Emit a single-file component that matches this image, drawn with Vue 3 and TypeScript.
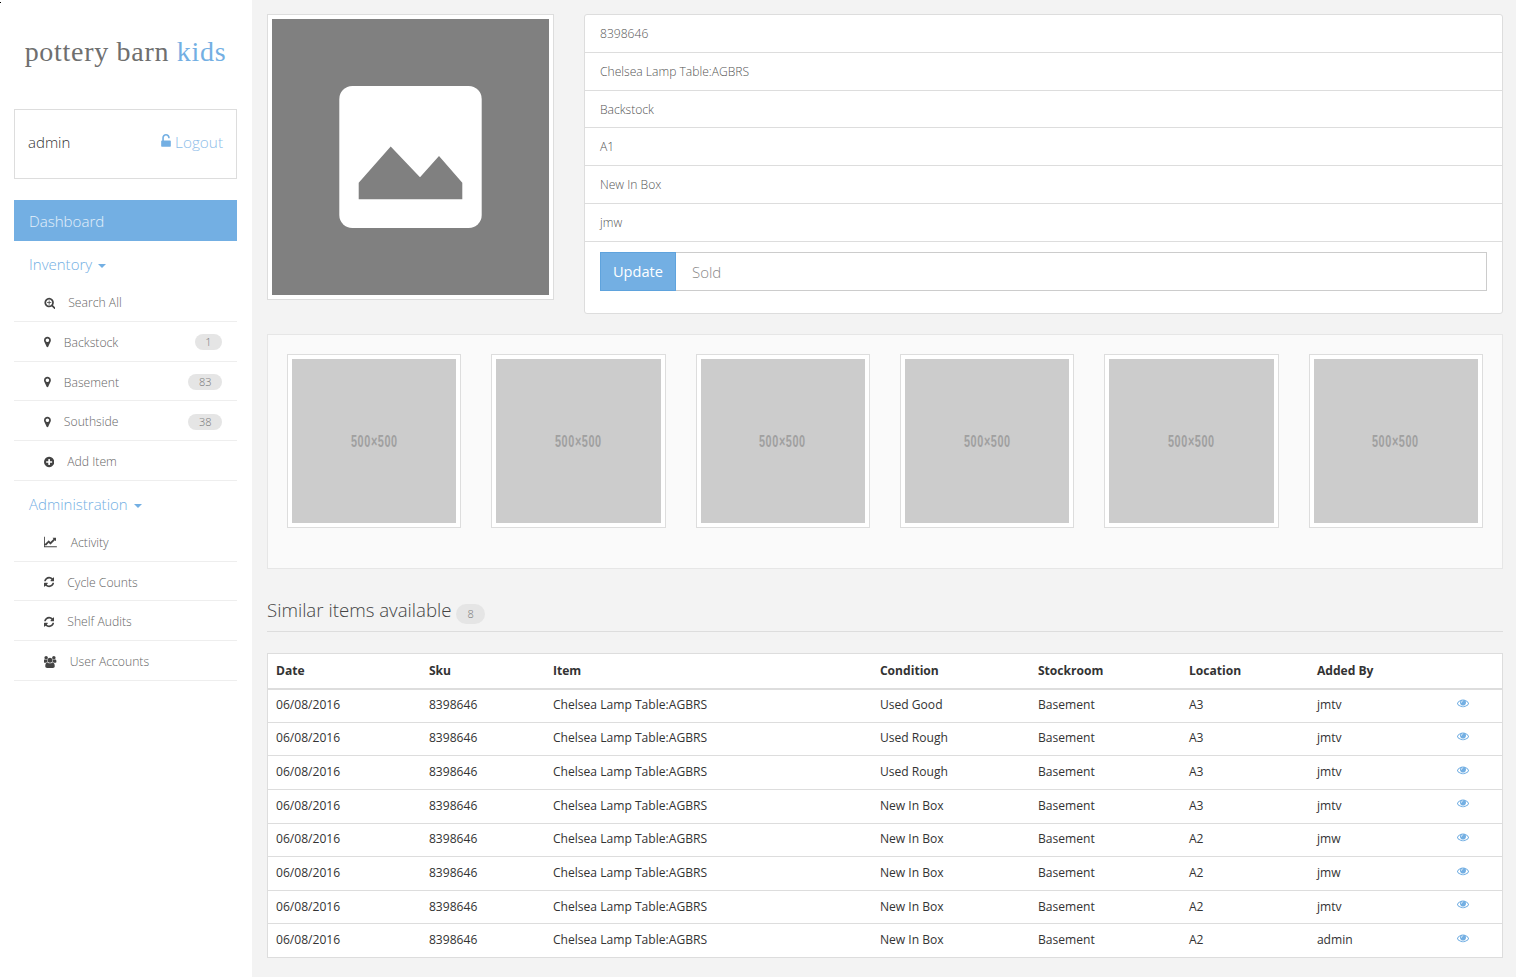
<script setup lang="ts">
const icons = {
  search: { w: 1664, d: 'M1088 800v64q0 13-9.5 22.5t-22.5 9.5h-224v224q0 13-9.5 22.5t-22.5 9.5h-64q-13 0-22.5-9.5t-9.5-22.5v-224h-224q-13 0-22.5-9.5t-9.5-22.5v-64q0-13 9.5-22.5t22.5-9.5h224v-224q0-13 9.5-22.5t22.5-9.5h64q13 0 22.5 9.5t9.5 22.5v224h224q13 0 22.5 9.5t9.5 22.5zm128 32q0-185-131.5-316.5t-316.5-131.5-316.5 131.5-131.5 316.5 131.5 316.5 316.5 131.5 316.5-131.5 131.5-316.5zm512 832q0 53-37.5 90.5t-90.5 37.5q-54 0-90-38l-343-342q-179 124-399 124-143 0-273.5-55.5t-225-150-150-225-55.5-273.5 55.5-273.5 150-225 225-150 273.5-55.5 273.5 55.5 225 150 150 225 55.5 273.5q0 220-124 399l343 343q37 37 37 90z' },
  marker: { w: 1024, x: 384, d: 'M1152 640q0-106-75-181t-181-75-181 75-75 181 75 181 181 75 181-75 75-181zm256 0q0 109-33 179l-364 774q-16 33-47.5 52t-67.5 19-67.5-19-46.5-52l-365-774q-33-70-33-179 0-212 150-362t362-150 362 150 150 362z' },
  plus: { w: 1536, x: 128, d: 'M1344 960v-128q0-26-19-45t-45-19h-256v-256q0-26-19-45t-45-19h-128q-26 0-45 19t-19 45v256h-256q-26 0-45 19t-19 45v128q0 26 19 45t45 19h256v256q0 26 19 45t45 19h128q26 0 45-19t19-45v-256h256q26 0 45-19t19-45zm320-64q0 209-103 385.5t-279.5 279.5-385.5 103-385.5-103-279.5-279.5-103-385.5 103-385.5 279.5-279.5 385.5-103 385.5 103 279.5 279.5 103 385.5z' },
  chart: { w: 2048, d: 'M1920 1536v128h-1920v-1536h128v1408h1792zm-128-1248v435q0 21-19.5 29.5t-35.5-7.5l-121-121-633 633q-10 10-23 10t-23-10l-233-233-416 416-192-192 585-585q10-10 23-10t23 10l233 233 464-464-121-121q-16-16-7.5-35.5t29.5-19.5h435q14 0 23 9t9 23z' },
  refresh: { w: 1536, x: 128, d: 'M1639 1056q0 5-1 7-64 268-268 434.5t-478 166.5q-146 0-282.5-55t-243.5-157l-129 129q-19 19-45 19t-45-19-19-45v-448q0-26 19-45t45-19h448q26 0 45 19t19 45-19 45l-137 137q71 66 161 102t187 36q134 0 250-65t186-179q11-17 53-117 8-23 30-23h192q13 0 22.5 9.5t9.5 22.5zm25-800v448q0 26-19 45t-45 19h-448q-26 0-45-19t-19-45 19-45l138-138q-148-137-349-137-134 0-250 65t-186 179q-11 17-53 117-8 23-30 23h-199q-13 0-22.5-9.5t-9.5-22.5v-7q65-268 270-434.5t480-166.5q146 0 284 55.5t245 156.5l130-129q19-19 45-19t45 19 19 45z' },
  users: { w: 1920, d: 'M529 896q-162 5-265 128h-134q-82 0-138-40.5t-56-118.5q0-353 124-353 6 0 43.5 21t97.5 42.5 119 21.5q67 0 133-23-5 37-5 66 0 139 81 256zm1071 637q0 120-73 189.5t-194 69.5h-874q-121 0-194-69.5t-73-189.5q0-53 3.5-103.5t14-109 26.5-108.5 43-97.5 62-81 85.5-53.5 111.5-20q10 0 43 21.5t73 48 107 48 135 21.5 135-21.5 107-48 73-48 43-21.5q61 0 111.5 20t85.5 53.5 62 81 43 97.5 26.5 108.5 14 109 3.5 103.5zm-1024-1277q0 106-75 181t-181 75-181-75-75-181 75-181 181-75 181 75 75 181zm704 384q0 159-112.5 271.5t-271.5 112.5-271.5-112.5-112.5-271.5 112.5-271.5 271.5-112.5 271.5 112.5 112.5 271.5zm576 225q0 78-56 118.5t-138 40.5h-134q-103-123-265-128 81-117 81-256 0-29-5-66 66 23 133 23 59 0 119-21.5t97.5-42.5 43.5-21q124 0 124 353zm-128-609q0 106-75 181t-181 75-181-75-75-181 75-181 181-75 181 75 75 181z' },
}
const eye = 'M1664 960q-152-236-381-353 61 104 61 225 0 185-131.5 316.5t-316.5 131.5-316.5-131.5-131.5-316.5q0-121 61-225-229 117-381 353 133 205 333.5 326.5t434.5 121.5 434.5-121.5 333.5-326.5zm-720-384q0-20-14-34t-34-14q-125 0-214.5 89.5t-89.5 214.5q0 20 14 34t34 14 34-14 14-34q0-86 61-147t147-61q20 0 34-14t14-34zm848 384q0 34-20 69-140 230-376.5 368.5t-499.5 138.5-499.5-139-376.5-368q-20-35-20-69t20-69q140-229 376.5-368t499.5-139 499.5 139 376.5 368q20 35 20 69z'
const lock = 'M1056 768q40 0 68 28t28 68v576q0 40-28 68t-68 28h-960q-40 0-68-28t-28-68v-576q0-40 28-68t68-28h32v-320q0-185 131.5-316.5t316.5-131.5 316.5 131.5 131.5 316.5q0 26-19 45t-45 19h-64q-26 0-45-19t-19-45q0-106-75-181t-181-75-181 75-75 181v320h736z'

type IconName = keyof typeof icons
interface NavItem { icon: IconName; label: string; badge?: string }

const inventory: NavItem[] = [
  { icon: 'search', label: 'Search All' },
  { icon: 'marker', label: 'Backstock', badge: '1' },
  { icon: 'marker', label: 'Basement', badge: '83' },
  { icon: 'marker', label: 'Southside', badge: '38' },
  { icon: 'plus', label: 'Add Item' },
]
const admin: NavItem[] = [
  { icon: 'chart', label: 'Activity' },
  { icon: 'refresh', label: 'Cycle Counts' },
  { icon: 'refresh', label: 'Shelf Audits' },
  { icon: 'users', label: 'User Accounts' },
]
const groups = [
  { title: 'Inventory', items: inventory },
  { title: 'Administration', items: admin },
]
const details = ['8398646', 'Chelsea Lamp Table:AGBRS', 'Backstock', 'A1', 'New In Box', 'jmw']
const thumbs = [1, 2, 3, 4, 5, 6]
const columns = ['Date', 'Sku', 'Item', 'Condition', 'Stockroom', 'Location', 'Added By', '']
const rows = [
  ['Used Good', 'A3', 'jmtv'],
  ['Used Rough', 'A3', 'jmtv'],
  ['Used Rough', 'A3', 'jmtv'],
  ['New In Box', 'A3', 'jmtv'],
  ['New In Box', 'A2', 'jmw'],
  ['New In Box', 'A2', 'jmw'],
  ['New In Box', 'A2', 'jmtv'],
  ['New In Box', 'A2', 'admin'],
]
</script>

<template>
  <div class="page">
    <span class="speck"></span>
    <aside class="sidebar">
      <div class="logo">pottery barn <span class="logo-kids">kids</span></div>
      <div class="user-box">
        <span class="user-name">admin</span>
        <a class="logout">
          <svg class="lock" viewBox="0 0 1152 1792" aria-hidden="true"><path :d="lock" /></svg>
          Logout
        </a>
      </div>
      <div class="dashboard">Dashboard</div>
      <nav v-for="group in groups" :key="group.title">
        <div class="group-title">{{ group.title }}<span class="caret"></span></div>
        <div v-for="item in group.items" :key="item.label" class="nav-row">
          <svg
            class="nav-icon"
            :viewBox="`${icons[item.icon].x ?? 0} 0 ${icons[item.icon].w} 1792`"
            :style="{ width: (icons[item.icon].w * 12) / 1792 + 'px' }"
            aria-hidden="true"
          >
            <path :d="icons[item.icon].d" />
          </svg>
          <span class="nav-label">{{ item.label }}</span>
          <span v-if="item.badge" class="badge nav-badge">{{ item.badge }}</span>
        </div>
      </nav>
    </aside>

    <main class="content">
      <section class="top">
        <div class="hero">
          <svg class="hero-image" viewBox="0 0 277 276" aria-hidden="true">
            <rect width="277" height="276" fill="#808080" />
            <rect x="67.3" y="67" width="142.4" height="142" rx="13" fill="#fff" />
            <polygon points="86.7,163.7 118.7,127.4 148,158.3 167,137 190.3,163.7 190.3,180.3 86.7,180.3" fill="#808080" />
          </svg>
        </div>
        <div class="details">
          <div v-for="d in details" :key="d" class="detail-row">{{ d }}</div>
          <div class="update-form">
            <button class="update-btn" type="button">Update</button>
            <div class="status-input">Sold</div>
          </div>
        </div>
      </section>

      <section class="gallery">
        <div v-for="t in thumbs" :key="t" class="thumb">
          <div class="thumb-image"><span class="thumb-text">500×500</span></div>
        </div>
      </section>

      <h2 class="section-title">Similar items available <span class="badge title-badge">8</span></h2>

      <table class="items">
        <colgroup>
          <col class="c1" /><col class="c2" /><col class="c3" /><col class="c4" />
          <col class="c5" /><col class="c6" /><col class="c7" /><col />
        </colgroup>
        <thead>
          <tr><th v-for="c in columns" :key="c">{{ c }}</th></tr>
        </thead>
        <tbody>
          <tr v-for="(r, i) in rows" :key="i">
            <td>06/08/2016</td>
            <td>8398646</td>
            <td>Chelsea Lamp Table:AGBRS</td>
            <td>{{ r[0] }}</td>
            <td>Basement</td>
            <td>{{ r[1] }}</td>
            <td>{{ r[2] }}</td>
            <td class="eye-cell">
              <svg class="eye" viewBox="0 0 1792 1792" aria-hidden="true"><path :d="eye" /></svg>
            </td>
          </tr>
        </tbody>
      </table>
    </main>
  </div>
</template>

<style>
html, body { margin: 0; background: #f3f3f3; }
</style>

<style scoped>
.page {
  position: relative;
  display: flex;
  height: 977px;
  overflow: hidden;
  font-family: "Open Sans", "Noto Sans", sans-serif;
  font-weight: 300;
  font-size: 12.1px;
  color: #333;
  background: #f3f3f3;
}
.speck {
  position: absolute;
  left: 0;
  top: 2px;
  width: 1px;
  height: 1px;
  background: #000;
}
.sidebar {
  width: 252px;
  box-sizing: border-box;
  flex: none;
  padding: 0 15px 0 14px;
  background: #fff;
}
.logo {
  height: 109px;
  padding-top: 33px;
  box-sizing: border-box;
  font-family: "Liberation Serif", serif;
  font-size: 28px;
  line-height: 38px;
  letter-spacing: 0.7px;
  color: #6f6f6f;
  text-align: center;
  white-space: nowrap;
}
.logo-kids { color: #73afe3; }
.user-box {
  display: flex;
  justify-content: space-between;
  align-items: center;
  height: 70px;
  box-sizing: border-box;
  padding: 0 13px 5px;
  border: 1px solid #ddd;
  font-size: 15px;
}
.user-name { color: #333; font-size: 15px; }
.logout { color: #8dbde9; font-size: 15.3px; }
.lock { height: 15px; width: 10px; fill: #73afe3; vertical-align: -1px; }
.dashboard {
  margin-top: 21px;
  height: 41px;
  line-height: 43px;
  padding-left: 15px;
  background: #73afe3;
  color: #e3effa;
  font-size: 15.1px;
}
.group-title {
  height: 41px;
  padding-left: 15px;
  line-height: 47px;
  font-size: 15px;
  color: #73afe3;
}
.caret {
  display: inline-block;
  margin-left: 6px;
  vertical-align: 2px;
  border-top: 4px solid #73afe3;
  border-left: 4px solid transparent;
  border-right: 4px solid transparent;
}
.nav-row {
  display: flex;
  align-items: center;
  height: 39.75px;
  box-sizing: border-box;
  padding: 2.6px 15px 0 30px;
  border-bottom: 1px solid #eee;
  color: #666;
  font-size: 12.2px;
}
.nav-icon { height: 12px; margin-right: 13px; fill: #444; flex: none; }
.nav-label { flex: 1; }
.badge {
  display: inline-block;
  border-radius: 10px;
  background: #e5e5e5;
  color: #777;
  font-size: 11px;
  text-align: center;
}
.nav-badge { padding: 0 10.5px; line-height: 16px; }

.content {
  flex: 1;
  min-width: 0;
  padding: 14px 13px 0 15px;
}
.top {
  display: grid;
  grid-template-columns: 287px 1fr;
  gap: 30px;
  align-items: start;
}
.hero {
  box-sizing: border-box;
  height: 286px;
  padding: 4px;
  background: #fff;
  border: 1px solid #ddd;
}
.hero-image { display: block; width: 277px; height: 276px; }
.details {
  height: 300px;
  box-sizing: border-box;
  background: #fff;
  border: 1px solid #ddd;
  border-radius: 3px;
}
.detail-row {
  height: 37.8px;
  box-sizing: border-box;
  padding: 0 15px;
  line-height: 37px;
  border-bottom: 1px solid #ddd;
  color: #555;
}
.update-form { display: flex; margin: 10px 15px 0; height: 39px; }
.update-btn {
  width: 76px;
  padding: 0;
  border: 1px solid #5fa3dd;
  background: #73afe3;
  color: #fff;
  font: 400 14.6px "Open Sans", sans-serif;
}
.status-input {
  flex: 1;
  box-sizing: border-box;
  padding-left: 16px;
  line-height: 39px;
  border: 1px solid #ccc;
  border-left: 0;
  font-size: 15px;
  color: #888;
  background: #fff;
}
.gallery {
  display: grid;
  grid-template-columns: repeat(6, 1fr);
  gap: 30px;
  height: 235px;
  box-sizing: border-box;
  margin-top: 20px;
  padding: 19px 19px 0;
  background: #fafafa;
  border: 1px solid #e6e6e6;
  align-items: start;
}
.thumb {
  box-sizing: border-box;
  padding: 4px;
  background: #fff;
  border: 1px solid #ddd;
}
.thumb-image {
  display: flex;
  align-items: center;
  justify-content: center;
  aspect-ratio: 1;
  background: #ccc;
}
.thumb-text {
  display: inline-block;
  padding-top: 1px;
  transform: scaleX(0.68);
  font: 700 16px "Liberation Sans", sans-serif;
  letter-spacing: 0.85px;
  color: #a0a0a0;
}
.section-title {
  margin: 31px 0 21px;
  height: 32px;
  box-sizing: border-box;
  border-bottom: 1px solid #ddd;
  font-size: 18.7px;
  font-weight: 300;
  line-height: 20px;
  color: #444;
}
.title-badge {
  padding: 0 11px;
  line-height: 20px;
  vertical-align: -1px;
  font-weight: 300;
}
.items {
  width: 100%;
  table-layout: fixed;
  border-collapse: collapse;
  background: #fff;
  border: 1px solid #ddd;
  color: #333;
}
.c1 { width: 153.4px; }
.c2 { width: 124px; }
.c3 { width: 327px; }
.c4 { width: 158px; }
.c5 { width: 151px; }
.c6 { width: 128px; }
.c7 { width: 139.6px; }
th {
  height: 33.5px;
  padding: 0 8px;
  text-align: left;
  font-weight: 700;
  color: #333;
  border-bottom: 2px solid #ddd;
}
td {
  height: 33.65px;
  box-sizing: border-box;
  padding: 0 8px 2px;
  border-bottom: 1px solid #ddd;
  font-weight: 400;
}
.eye-cell { padding-bottom: 6px; }
.eye { display: block; width: 12px; height: 12px; margin-left: 1px; fill: #73afe3; }
</style>
